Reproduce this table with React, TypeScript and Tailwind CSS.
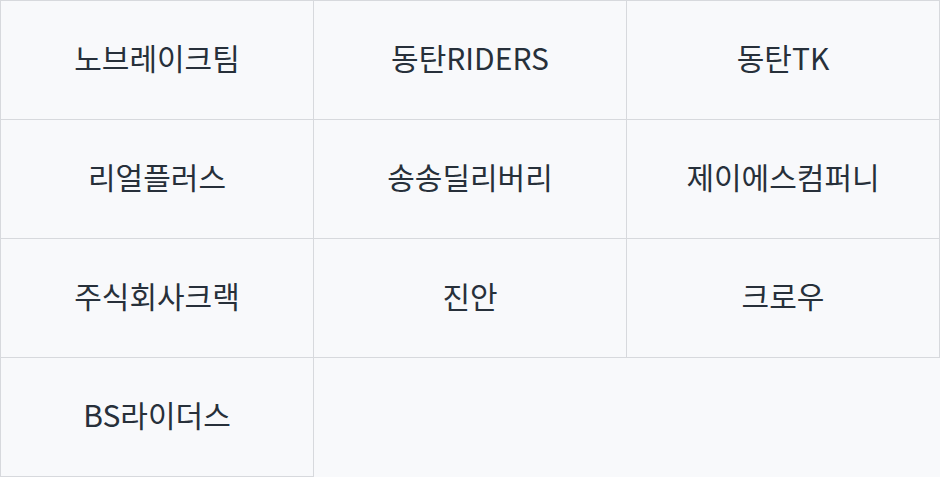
const partners = [
  "노브레이크팀",
  "동탄RIDERS",
  "동탄TK",
  "리얼플러스",
  "송송딜리버리",
  "제이에스컴퍼니",
  "주식회사크랙",
  "진안",
  "크로우",
  "BS라이더스",
];

export default function App() {
  return (
    <div
      className="w-[940px] h-[477px] bg-[#f8f9fb]"
      style={{ fontFamily: '"Noto Sans CJK KR", "Noto Sans", sans-serif' }}
    >
      <div className="grid grid-cols-3 border-t border-l border-[#d7d9dd]">
        {partners.map((name) => (
          <div
            key={name}
            className="h-[119px] flex items-center justify-center pb-[7px] border-r border-b border-[#d7d9dd] text-[30px] leading-none text-[#27303a]"
          >
            {name}
          </div>
        ))}
      </div>
    </div>
  );
}
